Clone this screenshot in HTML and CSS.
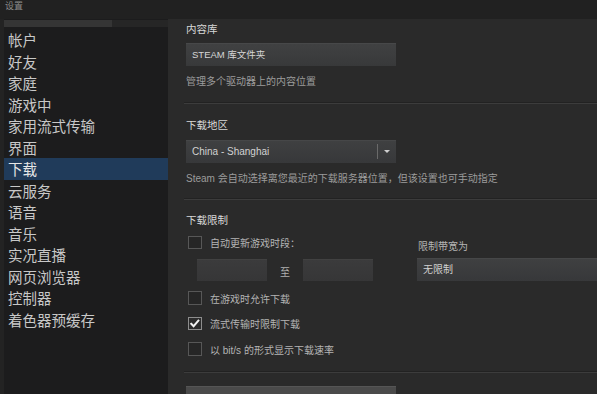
FILE: index.html
```html
<!DOCTYPE html>
<html lang="zh-CN">
<head>
<meta charset="utf-8">
<title>设置</title>
<link rel="stylesheet" href="styles.css">
</head>
<body>
<div class="window">
  <div class="titlebar">设置</div>
  <div class="frame">
    <nav class="sidebar">
      <div class="sidebar-top"><span class="thumb"></span></div>
      <ul class="menu">
        <li>帐户</li>
        <li>好友</li>
        <li>家庭</li>
        <li>游戏中</li>
        <li>家用流式传输</li>
        <li>界面</li>
        <li class="active">下载</li>
        <li>云服务</li>
        <li>语音</li>
        <li>音乐</li>
        <li>实况直播</li>
        <li>网页浏览器</li>
        <li>控制器</li>
        <li>着色器预缓存</li>
      </ul>
    </nav>
    <main class="content">
      <section class="section s1">
        <h2 class="heading">内容库</h2>
        <div class="btn">STEAM 库文件夹</div>
        <p class="desc d1">管理多个驱动器上的内容位置</p>
      </section>
      <div class="sep sep1"></div>
      <section class="section s2">
        <h2 class="heading">下载地区</h2>
        <div class="select">
          <span class="select-text">China - Shanghai</span>
          <span class="select-div"></span>
          <span class="select-arrow"></span>
        </div>
        <p class="desc d2">Steam 会自动选择离您最近的下载服务器位置，但该设置也可手动指定</p>
      </section>
      <div class="sep sep2"></div>
      <section class="section s3">
        <h2 class="heading">下载限制</h2>
        <div class="limit-grid">
          <div class="limit-left">
            <div class="check"><span class="box"></span><span class="check-text">自动更新游戏时段：</span></div>
            <div class="times">
              <span class="time-input"></span>
              <span class="to">至</span>
              <span class="time-input"></span>
            </div>
          </div>
          <div class="limit-right">
            <p class="bw-label"><span class="check-text bw-text">限制带宽为</span></p>
            <div class="bw-select">无限制</div>
          </div>
        </div>
        <div class="check row"><span class="box"></span><span class="check-text">在游戏时允许下载</span></div>
        <div class="check row"><span class="box checked"><svg viewBox="0 0 13 13" width="13" height="13"><path d="M2.5 6.8 L5.2 9.6 L10.6 3.2" fill="none" stroke="#f2f2f2" stroke-width="2.2" stroke-linecap="square"/></svg></span><span class="check-text">流式传输时限制下载</span></div>
        <div class="check row"><span class="box"></span><span class="check-text">以 bit/s 的形式显示下载速率</span></div>
      </section>
      <div class="sep sep3"></div>
      <div class="btn bottom-btn"></div>
    </main>
  </div>
</div>
</body>
</html>
```
FILE: styles.css
```css
* { box-sizing: border-box; }
html, body {
  margin: 0;
  padding: 0;
  width: 597px;
  height: 394px;
  overflow: hidden;
  background: #2a2a2a;
  font-family: "Liberation Sans", "Noto Sans CJK SC", Arial, sans-serif;
}
.window {
  width: 597px;
  height: 394px;
  display: flex;
  flex-direction: column;
  background: #2a2a2a;
}
.titlebar {
  height: 19px;
  flex: 0 0 19px;
  background: #212121;
  color: #8c8c8c;
  font-size: 9px;
  line-height: 13px;
  padding-left: 5px;
}
.frame {
  flex: 1;
  display: flex;
  min-height: 0;
  background: #2a2a2a;
}
.sidebar {
  width: 168px;
  flex: 0 0 168px;
  border-left: 4px solid #232323;
  background: #1c1c1d;
  padding-top: 1px;
}
.sidebar-top {
  height: 7px;
  background: #262626;
  display: flex;
}
.thumb {
  width: 108px;
  height: 7px;
  background: #353535;
}
.menu {
  list-style: none;
  margin: 0;
  padding: 2px 0 0 0;
}
.menu li {
  height: 21.5px;
  line-height: 21.5px;
  font-size: 14.5px;
  color: #c8c8c8;
  padding-left: 4px;
  font-family: "Noto Sans CJK SC", sans-serif;
  white-space: nowrap;
}
.menu li.active {
  background: #203b5a;
  color: #e6e6e6;
}
.content {
  flex: 1;
  padding: 3px 0 0 18px;
  min-width: 0;
}
.heading {
  margin: 0;
  font-weight: normal;
  font-size: 10.5px;
  line-height: 14px;
  color: #d8d8d8;
  font-family: "Noto Sans CJK SC", sans-serif;
}
.btn {
  width: 210px;
  height: 23px;
  margin-top: 7px;
  background: linear-gradient(#404142, #38393a);
  border-top: 1px solid #474849;
  color: #d6d6d6;
  font-size: 9.5px;
  line-height: 21px;
  padding-left: 6px;
}
.desc {
  margin: 0;
  font-size: 10px;
  line-height: 14px;
  color: #9c9c9c;
  white-space: nowrap;
}
.d1 { margin-top: 8.5px; }
.sep {
  height: 2px;
  margin-left: -2px;
  border-top: 1px solid #222;
  background: #3c3c3c;
}
.sep1 { margin-top: 13px; }
.section.s2 { margin-top: 14px; }
.select {
  width: 210px;
  height: 23px;
  margin-top: 8px;
  background: linear-gradient(#3f4041, #37383a);
  border-top: 1px solid #464748;
  display: flex;
  align-items: center;
}
.select-text {
  flex: 1;
  padding-left: 6px;
  font-size: 10px;
  color: #d2d2d2;
}
.select-div {
  width: 1px;
  height: 15px;
  background: #6a6a6a;
}
.select-arrow {
  width: 18px;
  display: flex;
  justify-content: center;
}
.select-arrow::before {
  content: "";
  border-left: 3.5px solid transparent;
  border-right: 3.5px solid transparent;
  border-top: 3.5px solid #cfcfcf;
}
.d2 { margin-top: 9px; }
.sep2 { margin-top: 12.5px; }
.section.s3 { margin-top: 12.5px; }
.limit-grid {
  display: flex;
  margin-top: 9px;
}
.limit-left {
  width: 231px;
  flex: 0 0 231px;
}
.limit-right {
  flex: 1;
  padding-top: 2px;
}
.check {
  display: flex;
  align-items: center;
  height: 14px;
  padding-left: 2px;
}
.box {
  width: 13.5px;
  height: 13.5px;
  border: 1px solid #575757;
  flex: 0 0 13.5px;
  display: flex;
  align-items: center;
  justify-content: center;
  background: #262626;
}
.box.checked {
  border-color: #8d8d8d;
  background: #2c2c2c;
}
.box svg { display: block; }
.check-text {
  margin-left: 8.5px;
  font-size: 10px;
  color: #b4b4b4;
  white-space: nowrap;
}
.bw-label {
  margin: 0;
  line-height: 14px;
  height: 14px;
  padding-left: 1px;
}
.bw-text {
  margin-left: 0;
  color: #b4b4b4;
}
.times {
  display: flex;
  align-items: center;
  margin-top: 9px;
  padding-left: 11px;
}
.time-input {
  width: 70px;
  height: 22px;
  background: linear-gradient(#3b3b3c, #363637);
  border-top: 1px solid #414141;
}
.to {
  width: 36px;
  text-align: center;
  font-size: 10px;
  color: #b0b0b0;
  padding-top: 3px;
}
.bw-select {
  margin-top: 6px;
  height: 23px;
  width: 200px;
  background: linear-gradient(#3f4041, #37383a);
  border-top: 1px solid #464748;
  font-size: 10px;
  line-height: 21px;
  color: #d0d0d0;
  padding-left: 6px;
}
.check.row { margin-top: 11.5px; }
.limit-grid + .check.row { margin-top: 10.5px; }
.sep3 { margin-top: 15px; }
.bottom-btn {
  margin-top: 13px;
  background: #4a4a4a;
  border-top: 1px solid #555;
}
```
